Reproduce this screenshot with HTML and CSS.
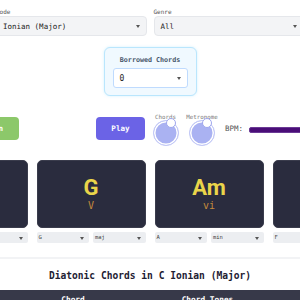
FILE: index.html
```html
<!DOCTYPE html>
<html lang="en">
<head>
  <meta charset="UTF-8" />
  <meta name="viewport" content="width=device-width, initial-scale=1.0" />
  <link rel="stylesheet" href="styles.css">
</head>
<body>
  <div class="page">
    <div class="selectors">
      <div class="field">
        <div class="label">Mode</div>
        <div class="select">Ionian (Major)<span class="arrow"></span></div>
      </div>
      <div class="field">
        <div class="label">Genre</div>
        <div class="select">All<span class="arrow"></span></div>
      </div>
    </div>

    <div class="borrowed">
      <div class="borrowed-title">Borrowed Chords</div>
      <div class="select select-white">0<span class="arrow"></span></div>
    </div>

    <div class="controls">
      <button class="btn btn-green">Regen</button>
      <button class="btn btn-play">Play</button>
      <div class="toggle toggle-chords">
        <div class="toggle-label">Chords</div>
        <div class="dial"><span class="knob"></span></div>
      </div>
      <div class="toggle toggle-metro">
        <div class="toggle-label">Metronome</div>
        <div class="dial"><span class="knob"></span></div>
      </div>
      <div class="bpm">BPM:</div>
      <div class="slider"></div>
    </div>

    <div class="cards">
      <div class="chord">
        <div class="card"><div class="name">C</div><div class="numeral">I</div></div>
        <div class="card-selects">
          <div class="mini">C<span class="arrow"></span></div>
          <div class="mini">maj<span class="arrow"></span></div>
        </div>
      </div>
      <div class="chord">
        <div class="card"><div class="name">G</div><div class="numeral">V</div></div>
        <div class="card-selects">
          <div class="mini">G<span class="arrow"></span></div>
          <div class="mini">maj<span class="arrow"></span></div>
        </div>
      </div>
      <div class="chord">
        <div class="card"><div class="name">Am</div><div class="numeral">vi</div></div>
        <div class="card-selects">
          <div class="mini">A<span class="arrow"></span></div>
          <div class="mini">min<span class="arrow"></span></div>
        </div>
      </div>
      <div class="chord">
        <div class="card"><div class="name">F</div><div class="numeral">IV</div></div>
        <div class="card-selects">
          <div class="mini">F<span class="arrow"></span></div>
          <div class="mini">maj<span class="arrow"></span></div>
        </div>
      </div>
    </div>

    <div class="section">
      <h2>Diatonic Chords in C Ionian (Major)</h2>
      <table>
        <thead>
          <tr>
            <th class="col-deg">Degree</th>
            <th class="col-chord">Chord</th>
            <th class="col-tones">Chord Tones</th>
            <th class="col-play">Play</th>
          </tr>
        </thead>
      </table>
    </div>
  </div>
</body>
</html>
```

FILE: styles.css
```css
body {
  margin: 0;
  background: #fff;
  font-family: 'DejaVu Sans Mono', 'Liberation Mono', monospace;
  color: #333;
  overflow: hidden;
}
.page {
  display: flex;
  flex-direction: column;
  align-items: center;
}

/* top selects */
.selectors {
  width: 308px;
  flex-shrink: 0;
  display: grid;
  grid-template-columns: 1fr 1fr;
  gap: 7px;
  margin-top: 7px;
}
.label {
  font-size: 6px;
  line-height: 9px;
  color: #555;
}
.select {
  position: relative;
  height: 20px;
  line-height: 20px;
  padding: 0 6px;
  background: #f3f4f6;
  border: 1px solid #e5e7eb;
  border-radius: 4px;
  box-sizing: border-box;
  font-size: 7.5px;
  color: #222;
}
.arrow {
  position: absolute;
  right: 6px;
  top: 50%;
  margin-top: -1px;
  border-left: 2.5px solid transparent;
  border-right: 2.5px solid transparent;
  border-top: 3px solid #555;
}

/* borrowed chords */
.borrowed {
  width: 93px;
  flex-shrink: 0;
  box-sizing: border-box;
  margin-top: 11px;
  padding: 8px 8px 7px;
  background: #f0f9ff;
  border: 1px solid #bae6fd;
  border-radius: 6px;
  box-shadow: 0 0 3px rgba(125, 211, 252, 0.35);
}
.borrowed-title {
  text-align: center;
  font-size: 6.7px;
  font-weight: 700;
  line-height: 9px;
  color: #475569;
  margin-bottom: 3px;
}
.select-white {
  background: #fff;
  border-color: #bfdbfe;
  border-radius: 3px;
  font-size: 8px;
}

/* controls */
.controls {
  width: 464px;
  flex-shrink: 0;
  display: flex;
  align-items: flex-start;
  margin-top: 18px;
  height: 33px;
}
.btn {
  height: 23px;
  margin-top: 3px;
  border: 0;
  border-radius: 4px;
  color: #fff;
  font-family: inherit;
  font-size: 7.6px;
  font-weight: 700;
  padding: 0;
  flex-shrink: 0;
}
.btn-green {
  width: 101px;
  background: #8cc86a;
  text-align: right;
  padding-right: 16px;
  white-space: nowrap;
}
.btn-play {
  width: 49px;
  margin-left: 77px;
  background: #6b63e6;
}
.toggle {
  display: flex;
  flex-direction: column;
  align-items: center;
  margin-left: 7.5px;
  flex-shrink: 0;
}
.toggle-chords { width: 26px; }
.toggle-metro { width: 32px; }
.toggle-label {
  font-size: 5.8px;
  line-height: 6px;
  color: #777;
  white-space: nowrap;
}
.dial {
  position: relative;
  width: 26px;
  height: 26px;
  box-sizing: border-box;
  border-radius: 50%;
  background: #aab2f2;
  border: 1px solid #c3c9f6;
  box-shadow: inset 0 0 0 1.5px #fff;
}
.knob {
  position: absolute;
  top: -3px;
  left: 12px;
  width: 10px;
  height: 10px;
  box-sizing: border-box;
  border-radius: 50%;
  background: #fff;
  border: 1px solid #9fa7ee;
}
.bpm {
  margin-left: 7px;
  margin-top: 10px;
  font-size: 7.5px;
  line-height: 10px;
  color: #555;
}
.slider {
  flex: 1;
  margin-left: 6px;
  margin-top: 13px;
  height: 4px;
  border-radius: 2px;
  background: #4a0e78;
  border: 0.5px solid #6b3a95;
}

/* chord cards */
.cards {
  width: 463px;
  flex-shrink: 0;
  display: grid;
  grid-template-columns: repeat(4, 1fr);
  gap: 9px;
  margin-top: 13px;
}
.card {
  height: 68px;
  box-sizing: border-box;
  background: #2a2c3e;
  border: 1px solid #3a3c4c;
  border-radius: 5px;
  display: flex;
  flex-direction: column;
  align-items: center;
  padding-top: 16px;
}
.name {
  font-family: Roboto, 'Liberation Sans', sans-serif;
  font-weight: 700;
  font-size: 22px;
  line-height: 22px;
  color: #ead54a;
}
.numeral {
  font-size: 10px;
  line-height: 12px;
  margin-top: 1px;
  color: #c48a3c;
}
.card-selects {
  display: grid;
  grid-template-columns: 1fr 1fr;
  gap: 4px;
  margin-top: 4px;
}
.mini {
  position: relative;
  height: 11px;
  line-height: 11px;
  padding: 0 2px;
  background: #eceef1;
  border-radius: 2px;
  font-size: 5.5px;
  color: #444;
}
.mini .arrow {
  right: 5px;
}

/* diatonic table */
.section {
  width: 420px;
  flex-shrink: 0;
  margin-top: 14px;
  border-top: 2px solid #f2f3f5;
  padding-top: 11px;
}
h2 {
  margin: 0 0 8px;
  text-align: center;
  font-size: 9.6px;
  line-height: 12px;
  font-weight: 700;
  color: #1e2133;
}
table {
  width: 420px;
  border-collapse: collapse;
  table-layout: fixed;
}
th {
  background: #373949;
  color: #fff;
  font-size: 7.8px;
  font-weight: 700;
  height: 20px;
  padding: 5px 0 0;
  vertical-align: top;
  text-align: center;
}
.col-deg { width: 66px; }
.col-chord { width: 134px; }
.col-tones { width: 135px; }
.col-play { width: 85px; }
```
